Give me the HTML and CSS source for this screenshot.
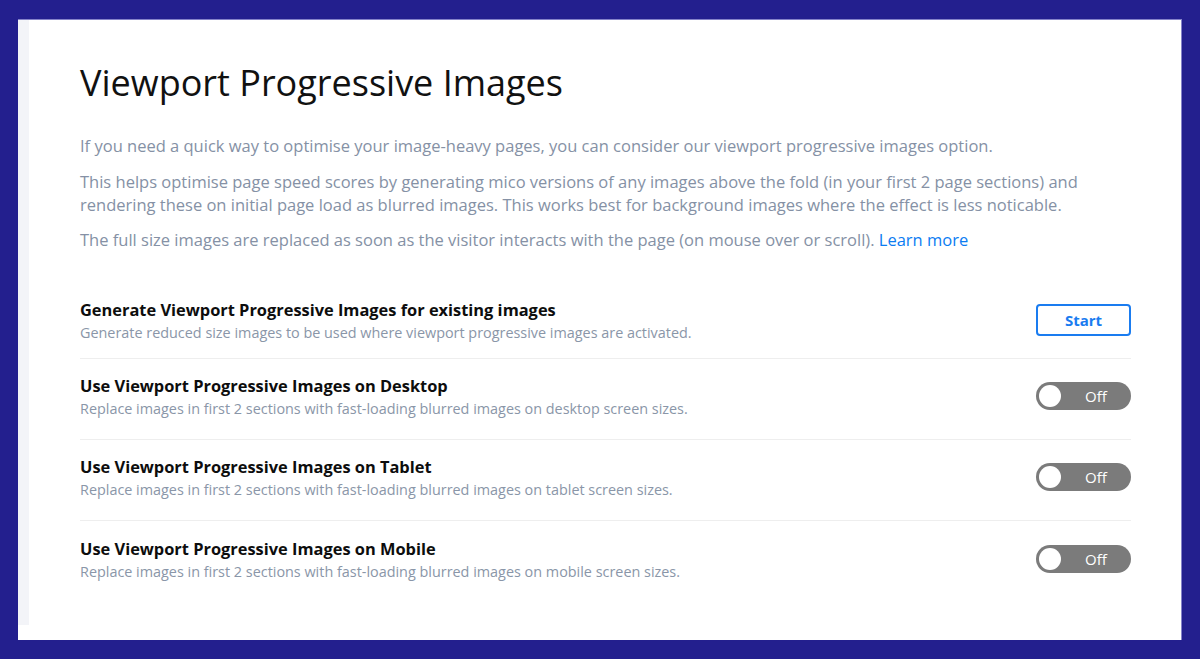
FILE: index.html
```html
<!DOCTYPE html>
<html lang="en">
<head>
<meta charset="utf-8">
<title>Viewport Progressive Images</title>
<link rel="stylesheet" href="styles.css">
</head>
<body>
<div class="frame">
  <div class="panel">
    <div class="stripe"></div>
    <div class="content">
      <h1 class="title">Viewport Progressive Images</h1>
      <p class="para">If you need a quick way to optimise your image-heavy pages, you can consider our viewport progressive images option.</p>
      <p class="para">This helps optimise page speed scores by generating mico versions of any images above the fold (in your first 2 page sections) and rendering these on initial page load as blurred images. This works best for background images where the effect is less noticable.</p>
      <p class="para">The full size images are replaced as soon as the visitor interacts with the page (on mouse over or scroll). <a class="link" href="#">Learn more</a></p>

      <div class="settings">
        <div class="row">
          <div class="row-text">
            <div class="row-title">Generate Viewport Progressive Images for existing images</div>
            <div class="row-sub">Generate reduced size images to be used where viewport progressive images are activated.</div>
          </div>
          <button class="btn">Start</button>
        </div>
        <div class="row">
          <div class="row-text">
            <div class="row-title">Use Viewport Progressive Images on Desktop</div>
            <div class="row-sub">Replace images in first 2 sections with fast-loading blurred images on desktop screen sizes.</div>
          </div>
          <div class="toggle"><span class="knob"></span><span class="toggle-label">Off</span></div>
        </div>
        <div class="row">
          <div class="row-text">
            <div class="row-title">Use Viewport Progressive Images on Tablet</div>
            <div class="row-sub">Replace images in first 2 sections with fast-loading blurred images on tablet screen sizes.</div>
          </div>
          <div class="toggle"><span class="knob"></span><span class="toggle-label">Off</span></div>
        </div>
        <div class="row">
          <div class="row-text">
            <div class="row-title">Use Viewport Progressive Images on Mobile</div>
            <div class="row-sub">Replace images in first 2 sections with fast-loading blurred images on mobile screen sizes.</div>
          </div>
          <div class="toggle"><span class="knob"></span><span class="toggle-label">Off</span></div>
        </div>
      </div>
    </div>
  </div>
</div>
</body>
</html>
```
FILE: styles.css
```css
* { box-sizing: border-box; }
html, body { margin: 0; padding: 0; }
body {
  background: #231f8e;
  font-family: "Open Sans", "Liberation Sans", sans-serif;
  width: 1200px;
  height: 659px;
  overflow: hidden;
}
.frame {
  padding: 19px 18px 19px 18px;
  height: 659px;
}
.panel {
  background: #ffffff;
  height: 621px;
  display: flex;
  border-top: 1px solid #8583c9;
  border-right: 1px solid #8583c9;
}
.stripe {
  width: 11px;
  flex: none;
  background: #f3f4f8;
  margin-bottom: 15px;
}
.content {
  flex: 1;
  padding: 40px 50px 0 51px;
}
.title {
  margin: 0 0 28px 0;
  font-size: 36px;
  font-weight: 400;
  line-height: 46px;
  color: #111111;
  letter-spacing: 0;
}
.para {
  margin: 0 0 13px 0;
  font-size: 16.5px;
  line-height: 23px;
  color: #8591a5;
}
.para:last-of-type {
  margin-top: -1px;
}
.link {
  color: #0b7cf2;
  text-decoration: none;
}
.settings {
  margin-top: 48px;
}
.row {
  display: flex;
  align-items: center;
  justify-content: space-between;
  height: 81px;
  border-bottom: 1px solid #eeeeee;
  padding-bottom: 3px;
}
.row:first-child {
  height: 60px;
  align-items: flex-start;
  padding-bottom: 0;
}
.row:last-child { border-bottom: none; }
.row-title {
  font-size: 16.4px;
  font-weight: 700;
  line-height: 22px;
  color: #0d0d0d;
}
.row-sub {
  font-size: 14.4px;
  line-height: 23px;
  color: #8a96a8;
}
.btn {
  width: 95px;
  height: 32px;
  margin-top: 5px;
  border: 2px solid #1a7cf0;
  border-radius: 4px;
  background: #ffffff;
  color: #1a7cf0;
  font-family: "Open Sans", "Liberation Sans", sans-serif;
  font-weight: 700;
  font-size: 15px;
  padding: 0;
}
.toggle {
  width: 95px;
  height: 28px;
  margin-bottom: 3px;
  border-radius: 14px;
  background: #7b7b7b;
  display: flex;
  align-items: center;
  padding-left: 3px;
}
.knob {
  width: 22px;
  height: 22px;
  border-radius: 50%;
  background: #ffffff;
  flex: none;
}
.toggle-label {
  flex: 1;
  text-align: center;
  color: #ffffff;
  font-size: 15px;
}
```
